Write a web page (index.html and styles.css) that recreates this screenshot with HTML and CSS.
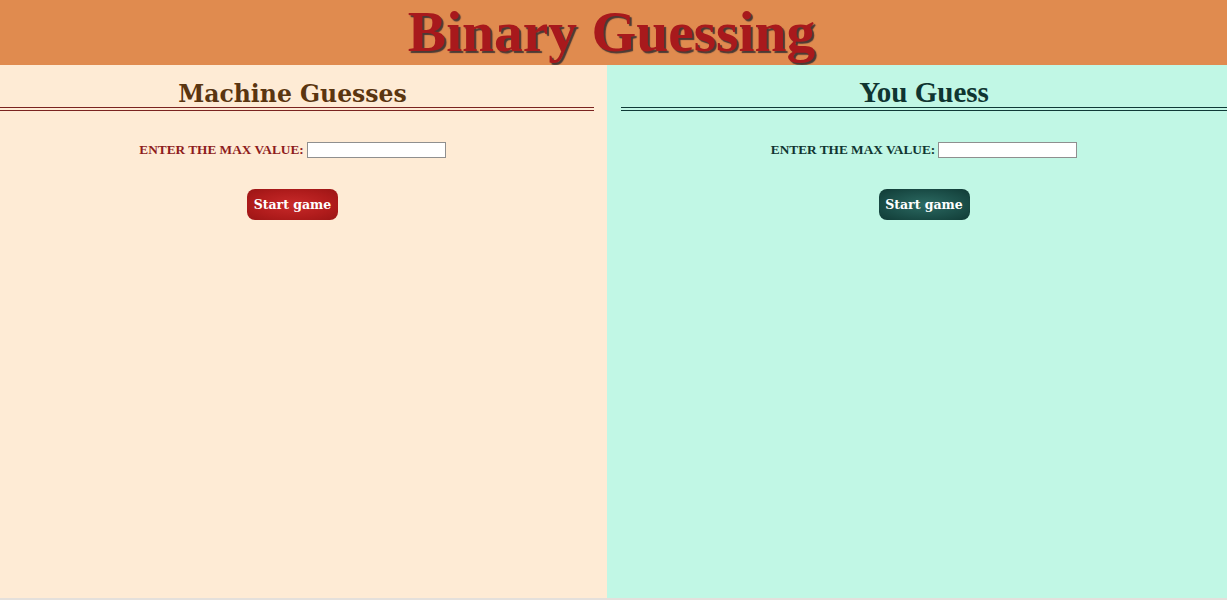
FILE: index.html
```html
<!DOCTYPE html>
<html lang="en">
<head>
<meta charset="utf-8">
<title>Binary Guessing</title>
<link rel="stylesheet" href="styles.css">
</head>
<body>
  <header class="top">
    <h1 class="title">Binary Guessing</h1>
  </header>
  <main class="panels">
    <section class="panel machine">
      <h2 class="panel-title">Machine Guesses</h2>
      <div class="field">
        <label class="label" for="m-max">ENTER THE MAX VALUE:</label>
        <input class="input" id="m-max" type="text">
      </div>
      <button class="btn" type="button">Start game</button>
    </section>
    <section class="panel you">
      <h2 class="panel-title">You Guess</h2>
      <div class="field">
        <label class="label" for="y-max">ENTER THE MAX VALUE:</label>
        <input class="input" id="y-max" type="text">
      </div>
      <button class="btn" type="button">Start game</button>
    </section>
  </main>
</body>
</html>
```

FILE: styles.css
```css
html, body {
  margin: 0;
  padding: 0;
  height: 100%;
}
body {
  font-family: "Liberation Serif", "Times New Roman", serif;
  display: flex;
  flex-direction: column;
  height: 598px;
  background: #e4e0dc;
}
.top {
  background: #e08b4f;
  height: 65px;
  display: flex;
  justify-content: center;
  align-items: flex-start;
}
.title {
  margin: 0 0 0 -4px;
  font-family: "Liberation Serif", serif;
  font-weight: bold;
  font-size: 57.5px;
  line-height: 64px;
  color: #a8191c;
  text-shadow: 2px 2px 1px #4a3a35;
}
.panels {
  flex: 1;
  display: flex;
}
.panel {
  display: flex;
  flex-direction: column;
  align-items: center;
}
.machine {
  width: 585px;
  padding-right: 22px;
  background: #feebd5;
  color: #8e1c1c;
}
.you {
  flex: 1;
  padding-left: 14px;
  background: #c1f7e5;
  color: #0f3531;
}
.panel-title {
  align-self: stretch;
  margin: 16px 0 0;
  text-align: center;
  font-family: "DejaVu Serif", Georgia, serif;
  font-weight: bold;
  font-size: 23.5px;
  line-height: 26px;
  padding-bottom: 0;
}
.machine .panel-title {
  margin-right: -9px;
  padding-right: 9px;
  color: #5a3510;
  border-bottom: 4px double #7a2320;
}
.you .panel-title {
  margin-top: 14px;
  padding-bottom: 2px;
  font-family: "Liberation Serif", serif;
  font-size: 29px;
  color: #0f3531;
  border-bottom: 4px double #0f3a37;
}
.field {
  margin-top: 31px;
  display: flex;
  align-items: center;
  gap: 3px;
}
.label {
  font-family: "Liberation Serif", serif;
  font-weight: bold;
  font-size: 13.3px;
}
.input {
  width: 135px;
  height: 14px;
  padding: 0 1px;
  border: 1px solid #8f8f8f;
  background: #fff;
  font-size: 12px;
}
.btn {
  margin-top: 31px;
  width: 91px;
  height: 31px;
  flex: 0 0 31px;
  border: none;
  border-radius: 8px;
  color: #fff;
  font-family: "DejaVu Serif", Georgia, serif;
  font-weight: bold;
  font-size: 12.5px;
  padding: 0;
  cursor: pointer;
}
.machine .btn {
  background: radial-gradient(ellipse at center, #c82a2a 0%, #b01c1c 60%, #9a1515 100%);
}
.you .btn {
  background: radial-gradient(ellipse at center, #2c6a62 0%, #1b4e48 60%, #103a35 100%);
}
```
